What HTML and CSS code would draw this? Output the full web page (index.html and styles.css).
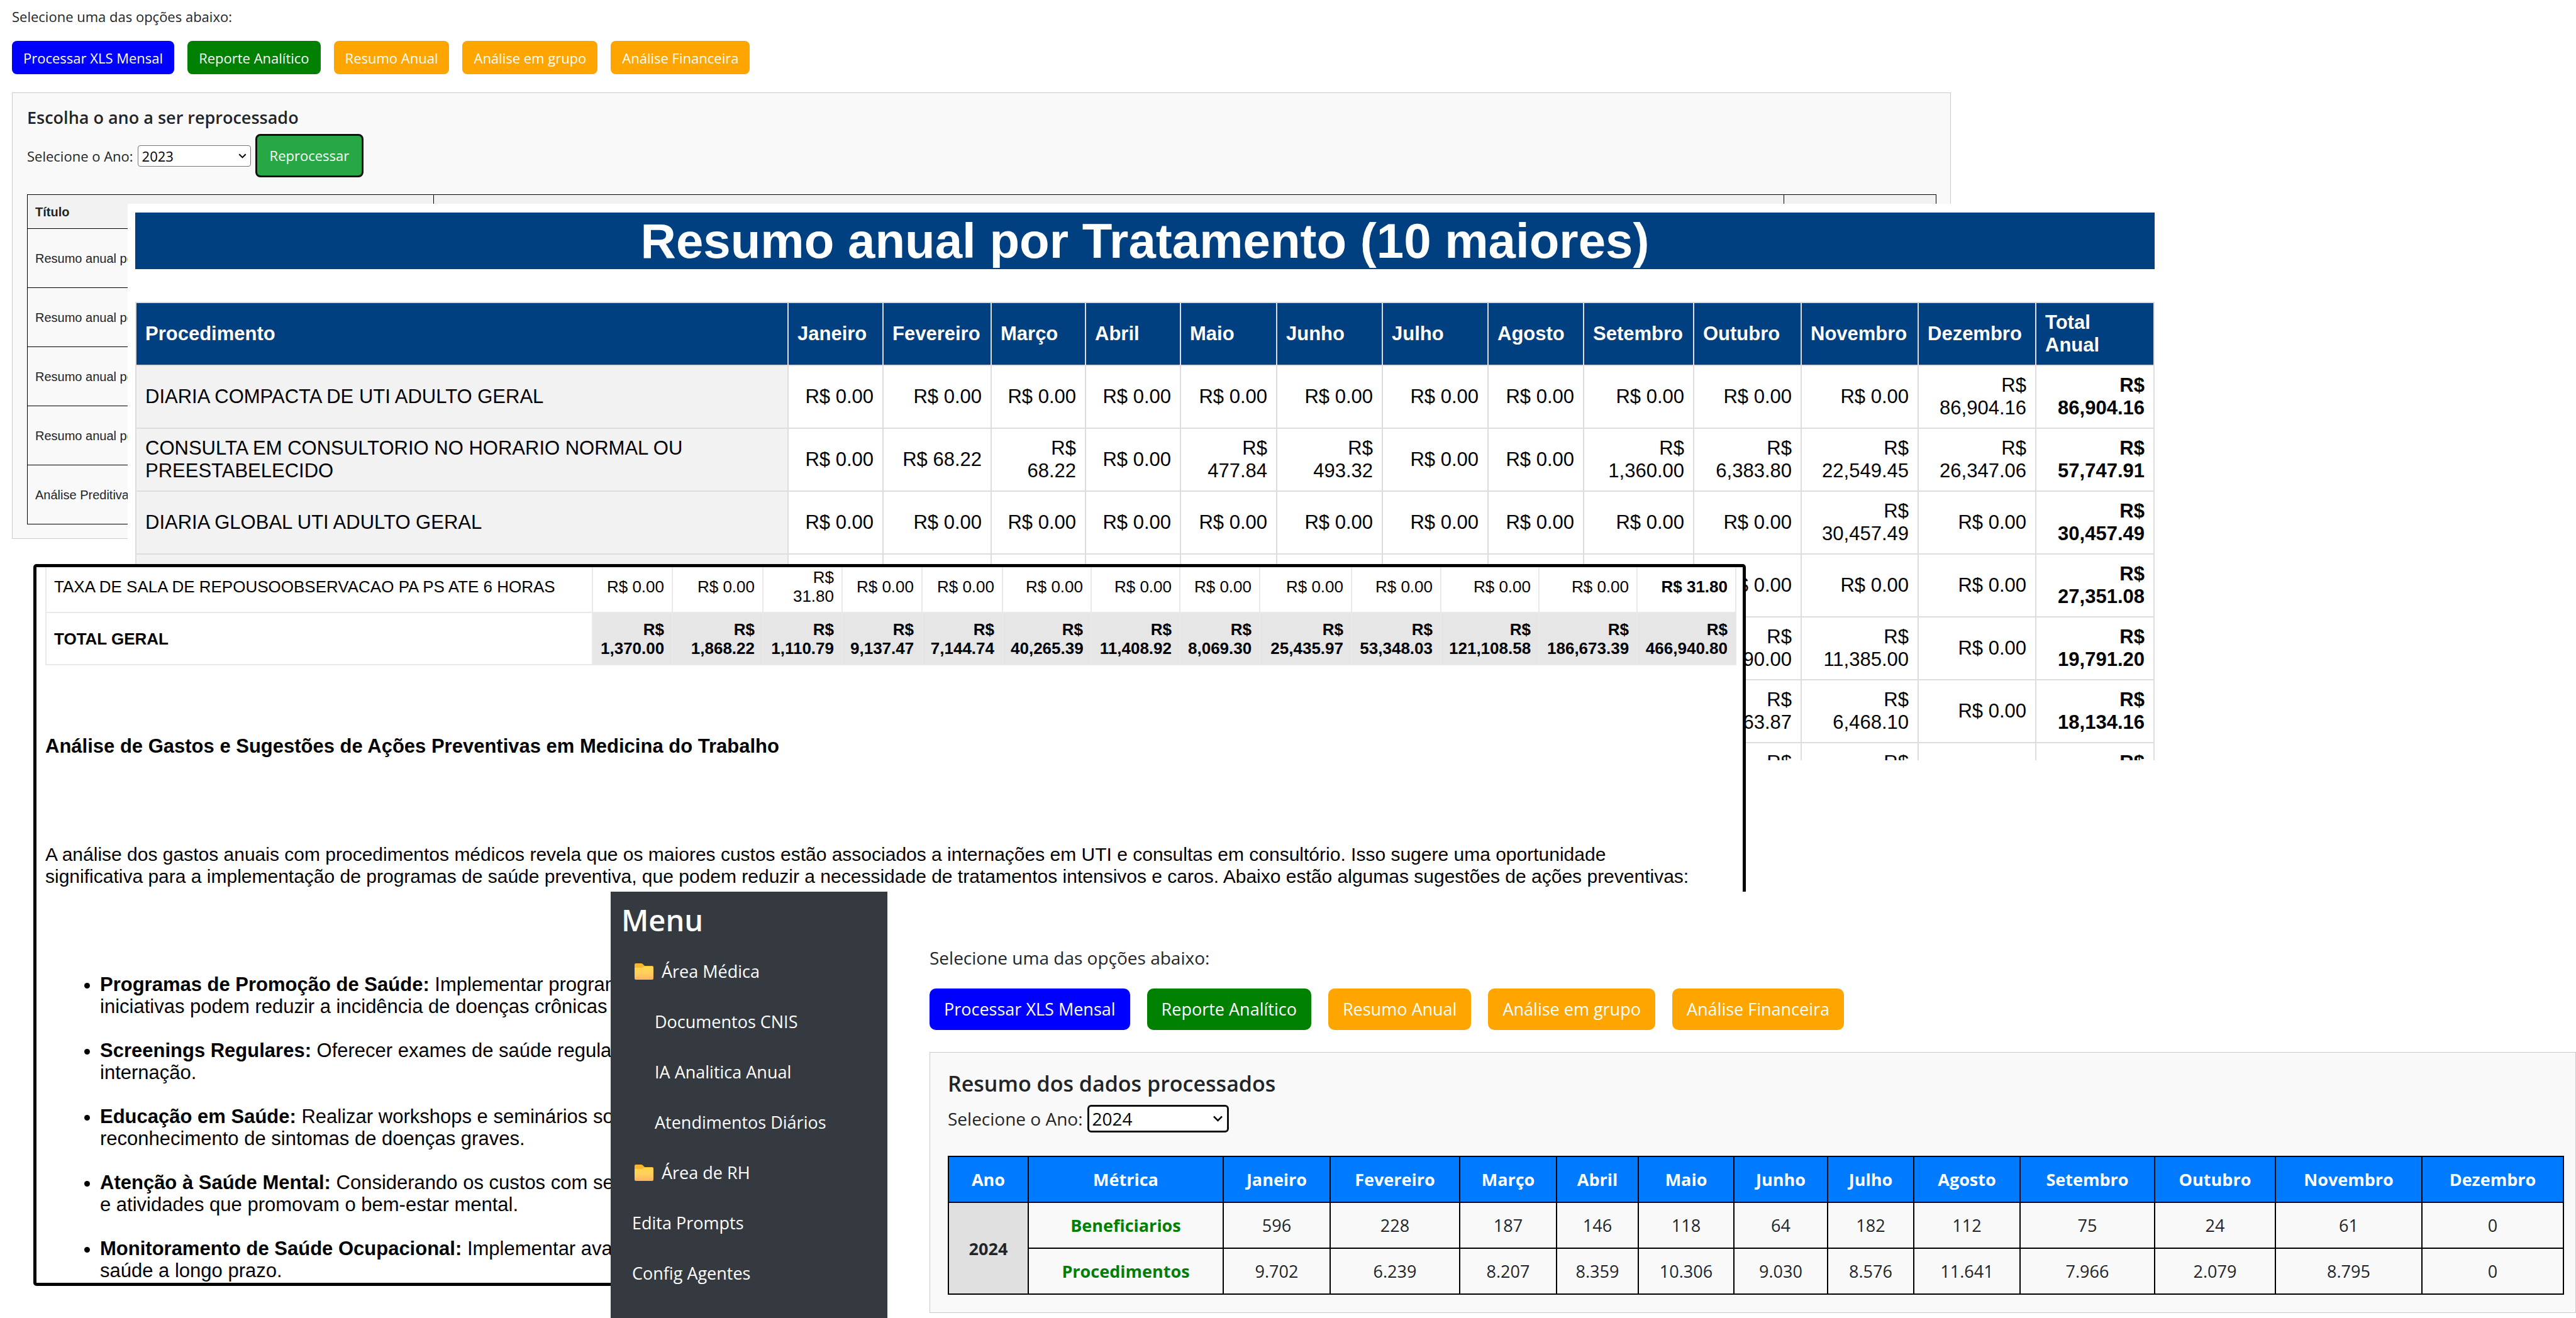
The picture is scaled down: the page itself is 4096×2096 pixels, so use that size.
FILE: index.html
```html
<!DOCTYPE html>
<html lang="pt-BR">
<head>
    <meta charset="UTF-8">
    <meta name="viewport" content="width=device-width, initial-scale=1.0">
    <title>Análise Médica</title>
    <link rel="stylesheet" href="styles.css">
</head>
<body>
    <!-- Reprocessamento anual -->
    <main class="app">
        <p class="intro">Selecione uma das opções abaixo:</p>
        <div class="options">
            <button type="button" class="btn blue">Processar XLS Mensal</button>
            <button type="button" class="btn green">Reporte Analítico</button>
            <button type="button" class="btn orange">Resumo Anual</button>
            <button type="button" class="btn orange">Análise em grupo</button>
            <button type="button" class="btn orange">Análise Financeira</button>
        </div>
        <section class="panel">
            <h2>Escolha o ano a ser reprocessado</h2>
            <div class="year-row">
                <label for="ano-reprocessar">Selecione o Ano:</label>
                <select id="ano-reprocessar">
                    <option>2023</option>
                    <option>2024</option>
                </select>
                <button type="button" class="btn-run">Reprocessar</button>
            </div>
            <table class="prompts">
                <thead>
                    <tr><th>Título</th><th></th><th></th></tr>
                </thead>
                <tbody>
                    <tr><td>Resumo anual por</td><td></td><td></td></tr>
                    <tr><td>Resumo anual por</td><td></td><td></td></tr>
                    <tr><td>Resumo anual por</td><td></td><td></td></tr>
                    <tr><td>Resumo anual por</td><td></td><td></td></tr>
                    <tr><td>Análise Preditiva</td><td></td><td></td></tr>
                </tbody>
            </table>
        </section>
    </main>

    <!-- Resumo por tratamento -->
    <section class="summary">
        <h1>Resumo anual por Tratamento (10 maiores)</h1>
        <table class="costs">
            <thead>
                <tr>
                    <th>Procedimento</th>
                    <th>Janeiro</th>
                    <th>Fevereiro</th>
                    <th>Março</th>
                    <th>Abril</th>
                    <th>Maio</th>
                    <th>Junho</th>
                    <th>Julho</th>
                    <th>Agosto</th>
                    <th>Setembro</th>
                    <th>Outubro</th>
                    <th>Novembro</th>
                    <th>Dezembro</th>
                    <th>Total Anual</th>
                </tr>
            </thead>
            <tbody>
                <tr>
                    <td>DIARIA COMPACTA DE UTI ADULTO GERAL</td>
                    <td>R$ 0.00</td><td>R$ 0.00</td><td>R$ 0.00</td><td>R$ 0.00</td>
                    <td>R$ 0.00</td><td>R$ 0.00</td><td>R$ 0.00</td><td>R$ 0.00</td>
                    <td>R$ 0.00</td><td>R$ 0.00</td><td>R$ 0.00</td><td>R$ 86,904.16</td>
                    <td>R$ 86,904.16</td>
                </tr>
                <tr>
                    <td>CONSULTA EM CONSULTORIO NO HORARIO NORMAL OU PREESTABELECIDO</td>
                    <td>R$ 0.00</td><td>R$ 68.22</td><td>R$ 68.22</td><td>R$ 0.00</td>
                    <td>R$ 477.84</td><td>R$ 493.32</td><td>R$ 0.00</td><td>R$ 0.00</td>
                    <td>R$ 1,360.00</td><td>R$ 6,383.80</td><td>R$ 22,549.45</td><td>R$ 26,347.06</td>
                    <td>R$ 57,747.91</td>
                </tr>
                <tr>
                    <td>DIARIA GLOBAL UTI ADULTO GERAL</td>
                    <td>R$ 0.00</td><td>R$ 0.00</td><td>R$ 0.00</td><td>R$ 0.00</td>
                    <td>R$ 0.00</td><td>R$ 0.00</td><td>R$ 0.00</td><td>R$ 0.00</td>
                    <td>R$ 0.00</td><td>R$ 0.00</td><td>R$ 30,457.49</td><td>R$ 0.00</td>
                    <td>R$ 30,457.49</td>
                </tr>
                <tr>
                    <td></td><td></td><td></td><td></td><td></td><td></td><td></td><td></td><td></td><td></td>
                    <td>R$ 0.00</td><td>R$ 0.00</td><td>R$ 0.00</td>
                    <td>R$ 27,351.08</td>
                </tr>
                <tr>
                    <td></td><td></td><td></td><td></td><td></td><td></td><td></td><td></td><td></td><td></td>
                    <td>R$ 1,690.00</td><td>R$ 11,385.00</td><td>R$ 0.00</td>
                    <td>R$ 19,791.20</td>
                </tr>
                <tr>
                    <td></td><td></td><td></td><td></td><td></td><td></td><td></td><td></td><td></td><td></td>
                    <td>R$ 3,863.87</td><td>R$ 6,468.10</td><td>R$ 0.00</td>
                    <td>R$ 18,134.16</td>
                </tr>
                <tr>
                    <td></td><td></td><td></td><td></td><td></td><td></td><td></td><td></td><td></td><td></td>
                    <td>R$ 2,540.00</td><td>R$ 9,120.00</td><td>R$ 0.00</td>
                    <td>R$ 16,310.00</td>
                </tr>
            </tbody>
        </table>
    </section>

    <!-- Relatório da análise -->
    <article class="report">
        <table class="totals">
            <tbody>
                <tr>
                    <td>TAXA DE SALA DE REPOUSOOBSERVACAO PA PS ATE 6 HORAS</td>
                    <td>R$ 0.00</td><td>R$ 0.00</td><td>R$ 31.80</td><td>R$ 0.00</td>
                    <td>R$ 0.00</td><td>R$ 0.00</td><td>R$ 0.00</td><td>R$ 0.00</td>
                    <td>R$ 0.00</td><td>R$ 0.00</td><td>R$ 0.00</td><td>R$ 0.00</td>
                    <td>R$ 31.80</td>
                </tr>
                <tr class="grand-total">
                    <td>TOTAL GERAL</td>
                    <td>R$ 1,370.00</td><td>R$ 1,868.22</td><td>R$ 1,110.79</td><td>R$ 9,137.47</td>
                    <td>R$ 7,144.74</td><td>R$ 40,265.39</td><td>R$ 11,408.92</td><td>R$ 8,069.30</td>
                    <td>R$ 25,435.97</td><td>R$ 53,348.03</td><td>R$ 121,108.58</td><td>R$ 186,673.39</td>
                    <td>R$ 466,940.80</td>
                </tr>
            </tbody>
        </table>
        <h3>Análise de Gastos e Sugestões de Ações Preventivas em Medicina do Trabalho</h3>
        <p>A análise dos gastos anuais com procedimentos médicos revela que os maiores custos estão associados a internações em UTI e consultas em consultório. Isso sugere uma oportunidade<br>significativa para a implementação de programas de saúde preventiva, que podem reduzir a necessidade de tratamentos intensivos e caros. Abaixo estão algumas sugestões de ações preventivas:</p>
        <ul>
            <li><strong>Programas de Promoção de Saúde:</strong> Implementar programas<br>iniciativas podem reduzir a incidência de doenças crônicas com</li>
            <li><strong>Screenings Regulares:</strong> Oferecer exames de saúde regulares<br>internação.</li>
            <li><strong>Educação em Saúde:</strong> Realizar workshops e seminários sobre<br>reconhecimento de sintomas de doenças graves.</li>
            <li><strong>Atenção à Saúde Mental:</strong> Considerando os custos com sessões<br>e atividades que promovam o bem-estar mental.</li>
            <li><strong>Monitoramento de Saúde Ocupacional:</strong> Implementar avaliações<br>saúde a longo prazo.</li>
        </ul>
    </article>

    <!-- Painel com menu lateral -->
    <div class="dashboard">
        <nav class="menu">
            <h2>Menu</h2>
            <a href="#medica" class="folder">
                <svg viewBox="0 0 30 28" width="30" height="28" aria-hidden="true">
                    <defs>
                        <linearGradient id="pasta" x1="0" y1="0" x2="0" y2="1">
                            <stop offset="0" stop-color="#ffd84f"/>
                            <stop offset="0.5" stop-color="#ffcf5a"/>
                            <stop offset="1" stop-color="#ffb262"/>
                        </linearGradient>
                    </defs>
                    <path d="M0 3a2 2 0 0 1 2-2h8c1 0 2 0 3 1l3 3h12a2 2 0 0 1 2 2v18H0z" fill="#f9b62f"/>
                    <path d="M0 8h11c1 0 2 0 3-1l1-1h13a2 2 0 0 1 2 2v17a2 2 0 0 1-2 2H2a2 2 0 0 1-2-2z" fill="url(#pasta)"/>
                </svg>
                Área Médica
            </a>
            <a href="#cnis" class="sub">Documentos CNIS</a>
            <a href="#analitica" class="sub">IA Analitica Anual</a>
            <a href="#atendimentos" class="sub">Atendimentos Diários</a>
            <a href="#rh" class="folder">
                <svg viewBox="0 0 30 28" width="30" height="28" aria-hidden="true">
                    <path d="M0 3a2 2 0 0 1 2-2h8c1 0 2 0 3 1l3 3h12a2 2 0 0 1 2 2v18H0z" fill="#f9b62f"/>
                    <path d="M0 8h11c1 0 2 0 3-1l1-1h13a2 2 0 0 1 2 2v17a2 2 0 0 1-2 2H2a2 2 0 0 1-2-2z" fill="url(#pasta)"/>
                </svg>
                Área de RH
            </a>
            <a href="#prompts">Edita Prompts</a>
            <a href="#agentes">Config Agentes</a>
        </nav>
        <div class="app large">
            <p class="intro">Selecione uma das opções abaixo:</p>
            <div class="options">
                <button type="button" class="btn blue">Processar XLS Mensal</button>
                <button type="button" class="btn green">Reporte Analítico</button>
                <button type="button" class="btn orange">Resumo Anual</button>
                <button type="button" class="btn orange">Análise em grupo</button>
                <button type="button" class="btn orange">Análise Financeira</button>
            </div>
            <section class="panel">
                <h2>Resumo dos dados processados</h2>
                <div class="year-row">
                    <label for="ano-resumo">Selecione o Ano:</label>
                    <select id="ano-resumo">
                        <option>2024</option>
                        <option>2023</option>
                    </select>
                </div>
                <table class="metrics">
                    <thead>
                        <tr>
                            <th>Ano</th>
                            <th>Métrica</th>
                            <th>Janeiro</th>
                            <th>Fevereiro</th>
                            <th>Março</th>
                            <th>Abril</th>
                            <th>Maio</th>
                            <th>Junho</th>
                            <th>Julho</th>
                            <th>Agosto</th>
                            <th>Setembro</th>
                            <th>Outubro</th>
                            <th>Novembro</th>
                            <th>Dezembro</th>
                        </tr>
                    </thead>
                    <tbody>
                        <tr>
                            <td rowspan="2" class="year">2024</td>
                            <td class="metric">Beneficiarios</td>
                            <td>596</td><td>228</td><td>187</td><td>146</td><td>118</td><td>64</td>
                            <td>182</td><td>112</td><td>75</td><td>24</td><td>61</td><td>0</td>
                        </tr>
                        <tr>
                            <td class="metric">Procedimentos</td>
                            <td>9.702</td><td>6.239</td><td>8.207</td><td>8.359</td><td>10.306</td><td>9.030</td>
                            <td>8.576</td><td>11.641</td><td>7.966</td><td>2.079</td><td>8.795</td><td>0</td>
                        </tr>
                    </tbody>
                </table>
            </section>
        </div>
    </div>
</body>
</html>
```
FILE: styles.css
```css
* {
    box-sizing: border-box;
}

body {
    position: relative;
    min-height: 100vh;
    margin: 0;
    overflow: hidden;
    background: #fff;
    color: #000;
    font-family: "Liberation Sans", Arial, sans-serif;
}

h1, h2, h3, p, ul {
    margin: 0;
}

table {
    width: 100%;
    border-collapse: collapse;
    table-layout: fixed;
}

/* App */
.app {
    width: 76%;
    padding: 8px 11px 0 19px;
    color: #212529;
    font-family: "Open Sans", "Segoe UI", sans-serif;
    font-size: 22px;
    line-height: 36px;
}

.options {
    display: flex;
    gap: 21px;
    margin: 21px 0 29px;
}

.btn {
    padding: 10px 18px 8px;
    border: none;
    border-radius: 8px;
    color: #fff;
    font: inherit;
    line-height: 35px;
    cursor: pointer;
}

.blue {
    background: #0000ff;
}

.green {
    background: #008000;
}

.orange {
    background: #ffa500;
}

.panel {
    padding: 22px 23px;
    border: 1px solid #ccc;
    background: #f9f9f9;
}

.panel h2 {
    margin-bottom: 9px;
    font-size: 27px;
    font-weight: 600;
    line-height: 34px;
}

.year-row {
    display: flex;
    align-items: center;
    gap: 7px;
    margin-bottom: 27px;
}

.year-row select {
    width: 180px;
    height: 34px;
    padding: 0 6px;
    border: 1px solid #767676;
    border-radius: 4px;
    appearance: none;
    background: #fff url("data:image/svg+xml,%3Csvg xmlns='http://www.w3.org/2000/svg' viewBox='0 0 16 10'%3E%3Cpath d='M1.500 1.500 8 8l6.500-6.500' fill='none' stroke='%23000' stroke-width='2.500'/%3E%3C/svg%3E") no-repeat right 6px center / 13px 8px;
    color: #000;
    font: inherit;
    line-height: 30px;
}

.btn-run {
    padding: 14px 20px;
    border: 3px solid #101010;
    border-radius: 8px;
    background: #28a745;
    box-shadow: 0 0 0 2px #fff;
    color: #fff;
    font: inherit;
    line-height: 35px;
    cursor: pointer;
}

.prompts {
    font-family: "Liberation Sans", Arial, sans-serif;
    font-size: 20px;
    line-height: 24px;
}

.prompts th,
.prompts td {
    height: 94px;
    padding: 0 12px;
    border: 1px solid #000;
    text-align: left;
}

.prompts th {
    height: 54px;
    background: #f2f2f2;
}

.prompts th:nth-child(1) { width: 646px; }
.prompts th:nth-child(2) { width: 2147px; }
.prompts th:nth-child(3) { width: 242px; }

/* Resumo por tratamento */
.summary {
    position: absolute;
    top: 324px;
    left: 203px;
    right: 658px;
    height: 885px;
    padding: 14px 12px 0;
    overflow: hidden;
    background: #fff;
}

.summary h1 {
    margin-bottom: 52px;
    background: #004080;
    color: #fff;
    font-size: 78px;
    line-height: 90px;
    text-align: center;
}

.costs {
    font-size: 31px;
    line-height: 36px;
}

.costs th,
.costs td {
    height: 100px;
    padding: 13px 14px;
    border: 2px solid #ddd;
    text-align: right;
}

.costs th {
    background: #004080;
    color: #fff;
    text-align: left;
}

.costs td:first-child {
    background: #f2f2f2;
    text-align: left;
}

.costs td:last-child,
.totals td:last-child {
    font-weight: bold;
}

.costs th:nth-child(1) { width: 1037px; }
.costs th:nth-child(2) { width: 151px; }
.costs th:nth-child(3) { width: 172px; }
.costs th:nth-child(4) { width: 150px; }
.costs th:nth-child(5) { width: 151px; }
.costs th:nth-child(6) { width: 153px; }
.costs th:nth-child(7) { width: 168px; }
.costs th:nth-child(8) { width: 168px; }
.costs th:nth-child(9) { width: 152px; }
.costs th:nth-child(10) { width: 175px; }
.costs th:nth-child(11) { width: 171px; }
.costs th:nth-child(12) { width: 186px; }
.costs th:nth-child(13) { width: 187px; }
.costs th:nth-child(14) { width: 188px; }

/* Relatório */
.report {
    position: absolute;
    top: 897px;
    left: 53px;
    right: 1320px;
    padding: 0 11px 2px 14px;
    overflow: hidden;
    border: 5px solid #000;
    border-radius: 5px;
    background: #fff;
    font-size: 30px;
    line-height: 35px;
}

.totals {
    margin-top: -12px;
    font-size: 26px;
    line-height: 30px;
}

.totals td {
    height: 83px;
    padding: 10px 12px;
    border: 2px solid #e9e9e9;
    text-align: right;
}

.totals td:first-child {
    text-align: left;
}

.grand-total td {
    background: #e6e6e6;
    font-weight: bold;
}

.grand-total td:first-child {
    background: #fff;
}

.totals td:nth-child(1) { width: 869px; }
.totals td:nth-child(2) { width: 127px; }
.totals td:nth-child(3) { width: 144px; }
.totals td:nth-child(4) { width: 126px; }
.totals td:nth-child(5) { width: 127px; }
.totals td:nth-child(6) { width: 128px; }
.totals td:nth-child(7) { width: 141px; }
.totals td:nth-child(8) { width: 141px; }
.totals td:nth-child(9) { width: 127px; }
.totals td:nth-child(10) { width: 146px; }
.totals td:nth-child(11) { width: 142px; }
.totals td:nth-child(12) { width: 156px; }
.totals td:nth-child(13) { width: 156px; }
.totals td:nth-child(14) { width: 157px; }

.report h3 {
    margin: 111px 0 137px;
    font-size: 31px;
}

.report ul {
    display: grid;
    gap: 35px;
    margin-top: 137px;
    padding-left: 87px;
    font-size: 31px;
}

/* Painel */
.dashboard {
    position: absolute;
    top: 1418px;
    left: 971px;
    right: 0;
    bottom: 0;
    display: flex;
    background: #fff;
}

.menu {
    flex: 0 0 440px;
    padding-top: 17px;
    background: #343a40;
    color: #fff;
    font-family: "Open Sans", "Segoe UI", sans-serif;
    font-size: 27px;
    line-height: 42px;
}

.menu h2 {
    margin: 0 0 14px 17px;
    font-size: 47px;
    font-weight: 600;
    line-height: 56px;
}

.menu a {
    display: flex;
    align-items: center;
    gap: 13px;
    padding: 19px 34px;
    color: #fff;
    text-decoration: none;
}

.menu .folder {
    padding-left: 38px;
}

.menu .sub {
    padding-left: 70px;
}

.large {
    flex: 1;
    padding: 84px 0 0 67px;
    font-size: 28px;
    line-height: 42px;
}

.large .options {
    gap: 27px;
    margin: 28px 0 35px;
}

.large .btn {
    padding: 12px 23px;
    border-radius: 10px;
    font-size: 27px;
    line-height: 42px;
}

.large .panel {
    padding: 28px 20px 28px 28px;
}

.large .panel h2 {
    margin-bottom: 13px;
    font-size: 34px;
    line-height: 42px;
}

.large .year-row {
    margin-bottom: 37px;
}

.large select {
    width: 225px;
    height: 44px;
    padding: 0 5px;
    border: 3px solid #101010;
    border-radius: 6px;
    background-size: 17px 10px;
    box-shadow: 0 0 0 2px #fff;
    line-height: 38px;
}

.metrics {
    font-size: 27px;
    line-height: 41px;
}

.metrics th,
.metrics td {
    padding: 15px 0;
    border: 2px solid #000;
    text-align: center;
}

.metrics th {
    background: #007bff;
    color: #fff;
}

.metrics .year {
    background: #e0e0e0;
    font-weight: bold;
}

.metrics .metric {
    color: #008000;
    font-weight: bold;
}

.metrics th:nth-child(1) { width: 127px; }
.metrics th:nth-child(2) { width: 310px; }
.metrics th:nth-child(3) { width: 170px; }
.metrics th:nth-child(4) { width: 206px; }
.metrics th:nth-child(5) { width: 154px; }
.metrics th:nth-child(6) { width: 130px; }
.metrics th:nth-child(7) { width: 152px; }
.metrics th:nth-child(8) { width: 149px; }
.metrics th:nth-child(9) { width: 137px; }
.metrics th:nth-child(10) { width: 169px; }
.metrics th:nth-child(11) { width: 214px; }
.metrics th:nth-child(12) { width: 192px; }
.metrics th:nth-child(13) { width: 233px; }
.metrics th:nth-child(14) { width: 225px; }
```
